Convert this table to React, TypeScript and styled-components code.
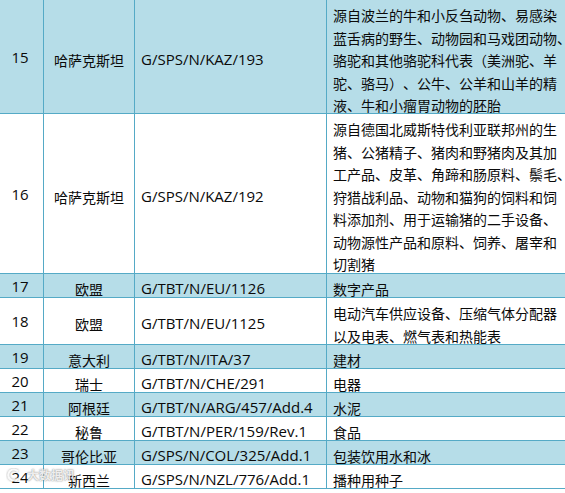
import React from "react";
import styled, { createGlobalStyle } from "styled-components";

const Global = createGlobalStyle`
  html, body { margin: 0; padding: 0; overflow: hidden; background: #fff; }
  body { font-family: "Noto Sans CJK SC", sans-serif; color: #0a0a0a; }
`;

const BORDER = "#55aac6";
const BLUE = "#b6dde8";

const Table = styled.div`
  position: relative;
  width: 565px;
  display: flex;
  flex-direction: column;
`;

const Row = styled.div<{ $h: number; $blue: boolean }>`
  display: grid;
  grid-template-columns: 44px 91px 192px 238px;
  height: ${(p) => p.$h}px;
  background: ${(p) => (p.$blue ? BLUE : "#fff")};
  border-bottom: 1px solid ${BORDER};
  box-sizing: border-box;
`;

const Cell = styled.div`
  display: flex;
  align-items: center;
  line-height: 22.5px;
  white-space: nowrap;
  box-sizing: border-box;
  border-right: 1px solid ${BORDER};
  min-width: 0;
`;

const NoCell = styled(Cell)`
  justify-content: center;
  padding: 0 3px 2px 0;
  font-family: "Open Sans", "Liberation Sans", sans-serif;
  font-size: 15px;
`;

const CountryCell = styled(Cell)`
  justify-content: center;
  padding-top: 4px;
  font-family: "Noto Sans CJK SC", sans-serif;
  font-size: 14px;
`;

const CodeCell = styled(Cell)`
  padding: 2px 0 0 6px;
  font-family: "Open Sans", "Liberation Sans", sans-serif;
  font-size: 15px;
`;

const DescCell = styled(Cell)`
  border-right: none;
  padding: 4px 0 0 6px;
  font-family: "Noto Sans CJK SC", sans-serif;
  font-size: 14px;
  text-spacing-trim: space-all;
`;

const Lines = styled.div`
  display: flex;
  flex-direction: column;
`;

const Watermark = styled.div`
  position: absolute;
  left: 6px;
  bottom: 6px;
  display: flex;
  align-items: center;
  gap: 5px;
  color: rgba(255, 255, 255, 0.85);
  font-family: "Noto Sans CJK SC", sans-serif;
  font-size: 12px;
  font-weight: 700;
  text-shadow: 0 0 1px rgba(90, 90, 90, 0.6), 0 0 2px rgba(90, 90, 90, 0.4);
  pointer-events: none;
`;

type Item = {
  no: string;
  country: string;
  code: string;
  lines: string[];
  h: number;
};

const rows: Item[] = [
  {
    no: "15",
    country: "哈萨克斯坦",
    code: "G/SPS/N/KAZ/193",
    lines: [
      "源自波兰的牛和小反刍动物、易感染",
      "蓝舌病的野生、动物园和马戏团动物、",
      "骆驼和其他骆驼科代表（美洲驼、羊",
      "驼、骆马）、公牛、公羊和山羊的精",
      "液、牛和小瘤胃动物的胚胎",
    ],
    h: 114,
  },
  {
    no: "16",
    country: "哈萨克斯坦",
    code: "G/SPS/N/KAZ/192",
    lines: [
      "源自德国北威斯特伐利亚联邦州的生",
      "猪、公猪精子、猪肉和野猪肉及其加",
      "工产品、皮革、角蹄和肠原料、鬃毛、",
      "狩猎战利品、动物和猫狗的饲料和饲",
      "料添加剂、用于运输猪的二手设备、",
      "动物源性产品和原料、饲养、屠宰和",
      "切割猪",
    ],
    h: 160,
  },
  { no: "17", country: "欧盟", code: "G/TBT/N/EU/1126", lines: ["数字产品"], h: 24 },
  {
    no: "18",
    country: "欧盟",
    code: "G/TBT/N/EU/1125",
    lines: ["电动汽车供应设备、压缩气体分配器", "以及电表、燃气表和热能表"],
    h: 47,
  },
  { no: "19", country: "意大利", code: "G/TBT/N/ITA/37", lines: ["建材"], h: 24 },
  { no: "20", country: "瑞士", code: "G/TBT/N/CHE/291", lines: ["电器"], h: 24 },
  { no: "21", country: "阿根廷", code: "G/TBT/N/ARG/457/Add.4", lines: ["水泥"], h: 24 },
  { no: "22", country: "秘鲁", code: "G/TBT/N/PER/159/Rev.1", lines: ["食品"], h: 24 },
  { no: "23", country: "哥伦比亚", code: "G/SPS/N/COL/325/Add.1", lines: ["包装饮用水和冰"], h: 24 },
  { no: "24", country: "新西兰", code: "G/SPS/N/NZL/776/Add.1", lines: ["播种用种子"], h: 24 },
];

export default function App() {
  return (
    <>
      <Global />
      <Table>
        {rows.map((r, i) => (
          <Row key={r.no} $h={r.h} $blue={i % 2 === 0}>
            <NoCell>{r.no}</NoCell>
            <CountryCell>{r.country}</CountryCell>
            <CodeCell>{r.code}</CodeCell>
            <DescCell>
              <Lines>
                {r.lines.map((l, j) => (
                  <span key={j}>{l}</span>
                ))}
              </Lines>
            </DescCell>
          </Row>
        ))}
        <Watermark>
          <svg width="16" height="14" viewBox="0 0 16 14">
            <path
              d="M12 3.5A5.5 5.5 0 1 0 12 10.5"
              fill="none"
              stroke="rgba(255,255,255,0.9)"
              strokeWidth="2.2"
              style={{ filter: "drop-shadow(0 0 1px rgba(90,90,90,0.6))" }}
            />
          </svg>
          <span>大数据讯</span>
        </Watermark>
      </Table>
    </>
  );
}
